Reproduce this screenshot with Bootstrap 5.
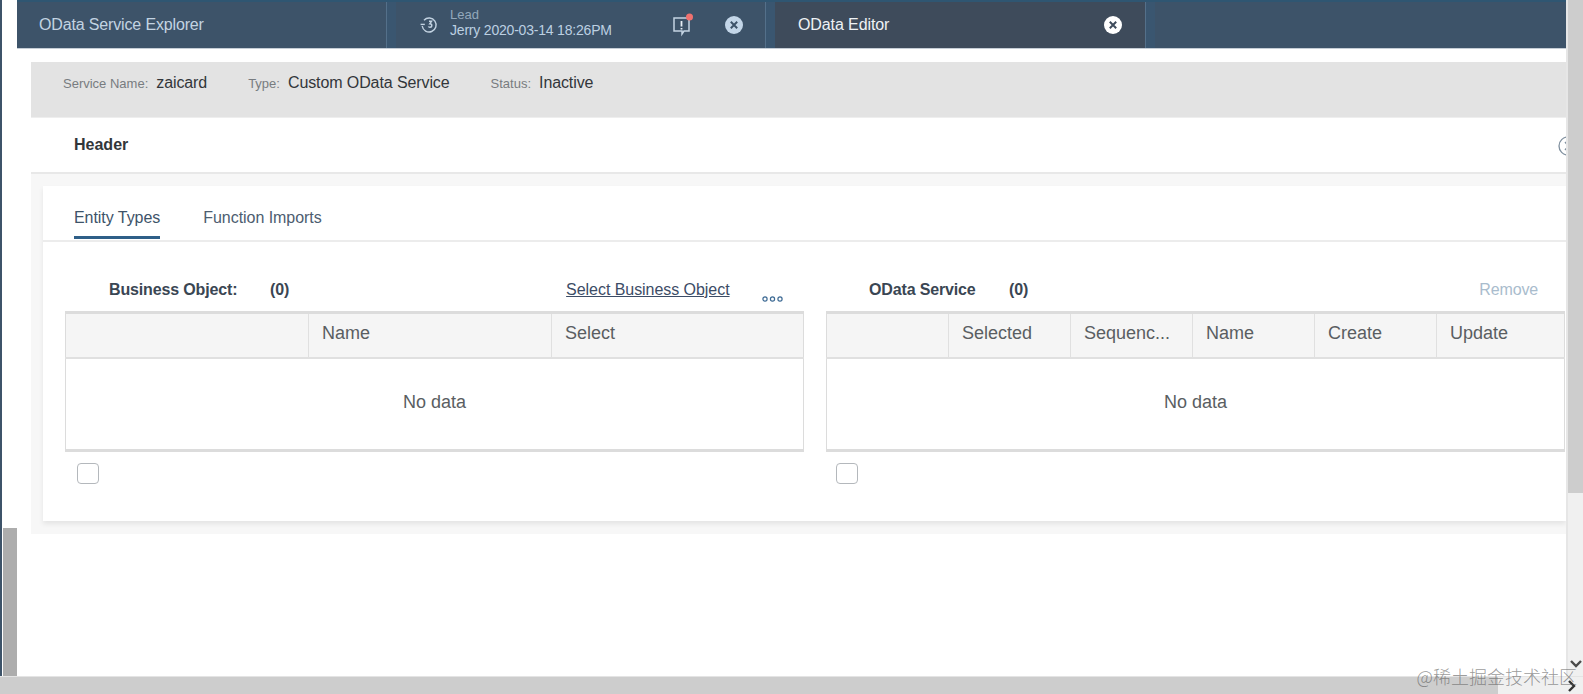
<!DOCTYPE html>
<html lang="en">
<head>
<meta charset="UTF-8">
<title>OData Editor</title>
<link href="https://cdn.jsdelivr.net/npm/bootstrap@5.3.0/dist/css/bootstrap.min.css" rel="stylesheet">
<style>
html, body { height: 694px; overflow: hidden; background: #fff; }
body { font-family: "Liberation Sans", Arial, sans-serif; color: #32363a; }
.frame { height: 694px; }
.rail { width: 17px; background: #fff; border-left: 2px solid #3d5369; }
.rail-thumb { height: 148px; margin-left: 1px; background: #adadad; }
.vbar { width: 17px; background: #f0f0f0; border-left: 2px solid #e6e6e6; }
.vbar-thumb { height: 493px; background: #cdcdcd; }
.vbar-arrow { height: 24px; color: #4a4a4a; }
.hbar { height: 18px; background: #f0f0f0; border-top: 1px solid #e4e4e4; }
.hbar-thumb { width: 1498px; background: #cdcdcd; }
.hbar-arrow { width: 22px; color: #333; margin-left: auto; }
.stamp { right: 6px; bottom: 7px; font-family: "Noto Sans CJK SC", sans-serif; font-weight: 300; font-size: 18px; line-height: 22px; color: rgba(90, 90, 90, .62); }

.shellbar { height: 49px; background: #3d5369; border-top: 2px solid #2f5672; border-bottom: 1px solid #c5cdd6; }
.tab-main { width: 370px; padding-left: 22px; color: #c3d3e2; font-size: 16px; letter-spacing: -.15px; border-right: 1px solid #54708a; }
.tab-gap { width: 9px; background: #3a5670; }
.tab-lead { width: 370px; color: #c3d3e2; border-right: 1px solid #54708a; }
.tab-lead-icon { margin-left: 24px; margin-right: 12px; }
.tab-lead-text { margin-top: -6px; }
.tab-small { font-size: 13px; line-height: 15px; color: #93a8bb; }
.tab-date { font-size: 14px; line-height: 16px; color: #bcd0e2; letter-spacing: -.2px; }
.tab-alert { margin-left: 60px; margin-right: 31px; }
.tab-edit { width: 371px; padding-left: 23px; padding-right: 23px; background: #3e4b5b; color: #eef2f5; font-size: 16px; letter-spacing: -.1px; border-right: 1px solid #54708a; }

.info-strip { height: 56px; margin-top: 13px; margin-left: 14px; padding: 9px 0 0 32px; background: #e3e3e3; gap: 41px; border-bottom: 1px solid #eee; }
.info-key { font-size: 13px; color: #787c80; margin-right: 8px; }
.info-val { font-size: 16px; letter-spacing: -.1px; }
.head-strip { height: 56px; margin-left: 14px; padding-left: 43px; border-bottom: 2px solid #e8e8e8; font-size: 16px; font-weight: 700; }
.head-toggle { right: -12px; top: 18px; }
.work-zone { margin-left: 14px; padding: 12px 0 13px 12px; background: #f7f7f7; }
.work-card { height: 335px; padding-left: 22px; background: #fff; box-shadow: 0 3px 5px rgba(0, 0, 0, .08); }
.tabs-row { height: 56px; margin-left: -22px; padding: 20px 0 0 31px; gap: 43px; border-bottom: 2px solid #ececec; font-size: 16px; letter-spacing: -.05px; }
.tab-link { height: 33px; color: #4d5d70; }
.tab-on { color: #3d5369; border-bottom: 3px solid #2f5f88; }
.pane { width: 739px; }
.pane + .pane { margin-left: 22px; }
.pane-head { height: 69px; padding-bottom: 9px; font-size: 16px; font-weight: 700; letter-spacing: -.15px; color: #3a4653; }
.pane-title { margin-left: 44px; width: 161px; }
.pane-title-alt { width: 140px; margin-left: 43px; }
.pane-link { margin-left: 277px; font-weight: 400; font-size: 16px; letter-spacing: -.05px; color: #3c4c66; text-decoration: underline; }
.pane-dots { margin-left: 32px; margin-top: 12px; }
.pane-remove { margin-left: auto; margin-right: 27px; font-weight: 400; font-size: 16px; color: #a9bccd; }
.grid-table { table-layout: fixed; width: 100%; margin: 0; border-top: 3px solid #dcdcdc; border-bottom: 3px solid #dcdcdc; border-left: 1px solid #dcdcdc; border-right: 1px solid #dcdcdc; font-size: 18px; color: #5a5e62; }
.grid-table th { height: 45px; padding: 0 13px 4px; background: #f5f5f5; font-weight: 400; border-right: 1px solid #e0e0e0; border-bottom: 2px solid #e0e0e0; white-space: nowrap; overflow: hidden; }
.grid-table th:last-child { border-right: 0; }
.grid-table td { height: 93px; padding: 0 0 2px; text-align: center; }
.w-wide { width: 243px; }
.w-slim { width: 122px; }
.tick { width: 22px; height: 21px; margin: 11px 0 0 12px; border: 1px solid #b4b8bc; border-radius: 4px; background: #fff; }
.pane + .pane .tick { margin-left: 10px; }
</style>
</head>
<body>
<div class="frame d-flex flex-column position-relative">
  <div class="d-flex flex-grow-1 overflow-hidden">
    <div class="rail d-flex flex-column justify-content-end"><div class="rail-thumb"></div></div>
    <div class="flex-grow-1 overflow-hidden">
      <div class="shellbar d-flex">
        <div class="tab-main d-flex align-items-center">OData Service Explorer</div>
        <div class="tab-gap"></div>
        <div class="tab-lead d-flex align-items-center">
          <svg class="tab-lead-icon" width="18" height="18" viewBox="0 0 18 18" fill="none" stroke="#c3d3e2" stroke-width="1.4">
            <path d="M4 4.2A7 7 0 1 1 2.2 10"/><path d="M0.6 8.4h4.2"/><path d="M9 5.2h2.6l-1.8 2.6c1.4 0 2 .8 2 1.7 0 1-.8 1.8-1.9 1.8-.7 0-1.3-.3-1.6-.8"/>
          </svg>
          <div class="tab-lead-text">
            <div class="tab-small">Lead</div>
            <div class="tab-date">Jerry 2020-03-14 18:26PM</div>
          </div>
          <svg class="tab-alert" width="22" height="24" viewBox="0 0 22 24" fill="none">
            <path d="M2 5h15v13h-5l-2 3v-3H2z" stroke="#c3d3e2" stroke-width="1.5"/>
            <path d="M9.5 8v5.5M9.5 15v1.6" stroke="#e6eef5" stroke-width="1.8"/>
            <circle cx="17.5" cy="4" r="3.5" fill="#f0716f"/>
          </svg>
          <svg width="18" height="18" viewBox="0 0 18 18"><circle cx="9" cy="9" r="9" fill="#c3d6e8"/><path d="M5.8 5.8l6.4 6.4M12.2 5.8l-6.4 6.4" stroke="#3d5369" stroke-width="2"/></svg>
        </div>
        <div class="tab-gap"></div>
        <div class="tab-edit d-flex align-items-center justify-content-between">
          <span>OData Editor</span>
          <svg width="18" height="18" viewBox="0 0 18 18"><circle cx="9" cy="9" r="9" fill="#fff"/><path d="M5.8 5.8l6.4 6.4M12.2 5.8l-6.4 6.4" stroke="#3e4b5b" stroke-width="2"/></svg>
        </div>
        <div class="tab-gap"></div>
      </div>
      <div class="info-strip d-flex align-items-start">
        <div class="d-flex align-items-baseline"><span class="info-key">Service Name:</span><span class="info-val">zaicard</span></div>
        <div class="d-flex align-items-baseline"><span class="info-key">Type:</span><span class="info-val">Custom OData Service</span></div>
        <div class="d-flex align-items-baseline"><span class="info-key">Status:</span><span class="info-val">Inactive</span></div>
      </div>
      <div class="head-strip d-flex align-items-center position-relative">Header
        <svg class="head-toggle position-absolute" width="20" height="20" viewBox="0 0 20 20" fill="none" stroke="#7f8f9e" stroke-width="1.3"><circle cx="10" cy="10" r="9"/><path d="M7 6l3.5 4-3.5 4M11 6l3.5 4-3.5 4"/></svg>
      </div>
      <div class="work-zone">
        <div class="work-card">
          <div class="tabs-row d-flex">
            <div class="tab-link tab-on">Entity Types</div>
            <div class="tab-link">Function Imports</div>
          </div>
          <div class="d-flex">
            <div class="pane">
              <div class="pane-head d-flex align-items-end">
                <span class="pane-title">Business Object:</span><span>(0)</span>
                <span class="pane-link">Select Business Object</span>
                <svg class="pane-dots" width="21" height="6" viewBox="0 0 21 6" fill="none" stroke="#3d6a94" stroke-width="1.2"><circle cx="3" cy="3" r="2.1"/><circle cx="10.5" cy="3" r="2.1"/><circle cx="18" cy="3" r="2.1"/></svg>
              </div>
              <table class="grid-table">
                <tr><th class="w-wide"></th><th class="w-wide">Name</th><th>Select</th></tr>
                <tr><td colspan="3">No data</td></tr>
              </table>
              <div class="tick"></div>
            </div>
            <div class="pane">
              <div class="pane-head d-flex align-items-end">
                <span class="pane-title pane-title-alt">OData Service</span><span>(0)</span>
                <span class="pane-remove">Remove</span>
              </div>
              <table class="grid-table">
                <tr><th class="w-slim"></th><th class="w-slim">Selected</th><th class="w-slim">Sequenc...</th><th class="w-slim">Name</th><th class="w-slim">Create</th><th>Update</th></tr>
                <tr><td colspan="6">No data</td></tr>
              </table>
              <div class="tick"></div>
            </div>
          </div>
        </div>
      </div>
    </div>
    <div class="vbar d-flex flex-column">
      <div class="vbar-thumb"></div>
      <div class="vbar-arrow mt-auto d-flex align-items-center justify-content-center">
        <svg width="12" height="8" viewBox="0 0 12 8" fill="none" stroke="currentColor" stroke-width="2.4"><path d="M1 1l5 5 5-5"/></svg>
      </div>
    </div>
  </div>
  <div class="hbar d-flex">
    <div class="hbar-thumb"></div>
    <div class="hbar-arrow d-flex align-items-center justify-content-center">
      <svg width="9" height="12" viewBox="0 0 9 12" fill="none" stroke="currentColor" stroke-width="2.4"><path d="M1 1l5 5-5 5"/></svg>
    </div>
  </div>
  <div class="stamp position-absolute">@稀土掘金技术社区</div>
</div>
<script src="https://cdn.jsdelivr.net/npm/bootstrap@5.3.0/dist/js/bootstrap.bundle.min.js"></script>
</body>
</html>
